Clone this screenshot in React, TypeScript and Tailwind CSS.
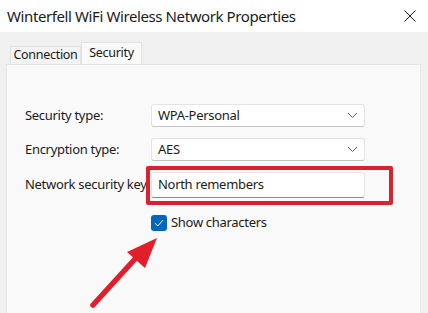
import React from "react";

const font = { fontFamily: '"Noto Sans", "Open Sans", sans-serif' };

const Chevron = () => (
  <svg width="11" height="7" viewBox="0 0 11 7" className="shrink-0">
    <path d="M1 1 L5.5 5.5 L10 1" fill="none" stroke="#606060" strokeWidth="1" />
  </svg>
);

const Select = ({ value }: { value: string }) => (
  <div className="flex items-center justify-between w-[214px] h-[23px] bg-white border border-[#e3e3e3] border-b-[#c4c4c4] rounded-[3px] pl-[6px] pr-[6px]">
    <span className="text-[13px] tracking-[-0.3px] text-[#1b1b1b]">{value}</span>
    <Chevron />
  </div>
);

export default function App() {
  return (
    <div className="w-[428px] h-[313px] overflow-hidden bg-[#f0f0f0] flex flex-col" style={font}>
      {/* title bar */}
      <div className="h-[32px] bg-white flex items-center justify-between pl-[7px] pr-[12px] shrink-0">
        <span className="text-[15px] tracking-[-0.4px] text-[#1a1a1a]">Winterfell WiFi Wireless Network Properties</span>
        <svg width="12" height="12" viewBox="0 0 12 12">
          <path d="M0.5 0.5 L11.5 11.5 M11.5 0.5 L0.5 11.5" stroke="#1a1a1a" strokeWidth="1" />
        </svg>
      </div>

      {/* tabs */}
      <div className="flex items-end pl-[10px] pt-[10px] h-[32px] shrink-0">
        <div className="w-[71px] h-[18px] border border-b-0 border-[#e2e2e2] bg-[#f3f3f3] flex items-center justify-center text-[12.5px] tracking-[-0.3px] text-[#1a1a1a]">
          Connection
        </div>
        <div className="w-[61px] h-[22px] border border-b-0 border-[#e2e2e2] bg-[#f9f9f9] flex items-start pt-[1px] justify-center text-[12.5px] tracking-[-0.3px] text-[#1a1a1a]">
          Security
        </div>
      </div>

      {/* panel */}
      <div className="mx-[6px] w-[415px] flex-1 bg-[#f9f9f9] border border-[#e5e5e5] border-b-0 pl-[18px] pt-[39px] relative">
        <div className="flex flex-col gap-[11px]">
          <div className="flex items-center">
            <span className="w-[126px] whitespace-nowrap text-[13px] tracking-[-0.3px] text-[#1b1b1b]">Security type:</span>
            <Select value="WPA-Personal" />
          </div>
          <div className="flex items-center">
            <span className="w-[126px] whitespace-nowrap text-[13px] tracking-[-0.3px] text-[#1b1b1b]">Encryption type:</span>
            <Select value="AES" />
          </div>
          <div className="flex items-center">
            <span className="w-[126px] whitespace-nowrap text-[13px] tracking-[-0.3px] text-[#1b1b1b]">Network security key</span>
            <div className="relative">
              <div className="w-[214px] h-[26px] bg-white border border-[#e3e3e3] border-b-[#8a8a8a] rounded-[3px] pl-[6px] flex items-center text-[13px] tracking-[-0.3px] text-[#1b1b1b]">
                North remembers
              </div>
              <div className="absolute left-[-5px] top-[-6px] w-[247px] h-[39px] border-[4px] border-[#d9222f] rounded-[2px]" />
            </div>
          </div>
        </div>

        <div className="flex items-center mt-[15px] ml-[126px] gap-[4px]">
          <div className="w-[16px] h-[16px] rounded-[3px] bg-[#0067c0] flex items-center justify-center">
            <svg width="10" height="8" viewBox="0 0 10 8">
              <path d="M1 4.2 L3.8 7 L9 1" fill="none" stroke="white" strokeWidth="1" />
            </svg>
          </div>
          <span className="text-[13px] tracking-[-0.3px] text-[#1b1b1b]">Show characters</span>
        </div>

        {/* annotation arrow */}
        <svg className="absolute left-[-7px] top-[-65px]" width="428" height="313" viewBox="0 0 428 313">
          <line x1="93" y1="305" x2="135" y2="259" stroke="#e21e2b" strokeWidth="5.5" strokeLinecap="round" />
          <polygon points="157,238 127,252 145,268" fill="#e21e2b" />
        </svg>
      </div>
    </div>
  );
}
